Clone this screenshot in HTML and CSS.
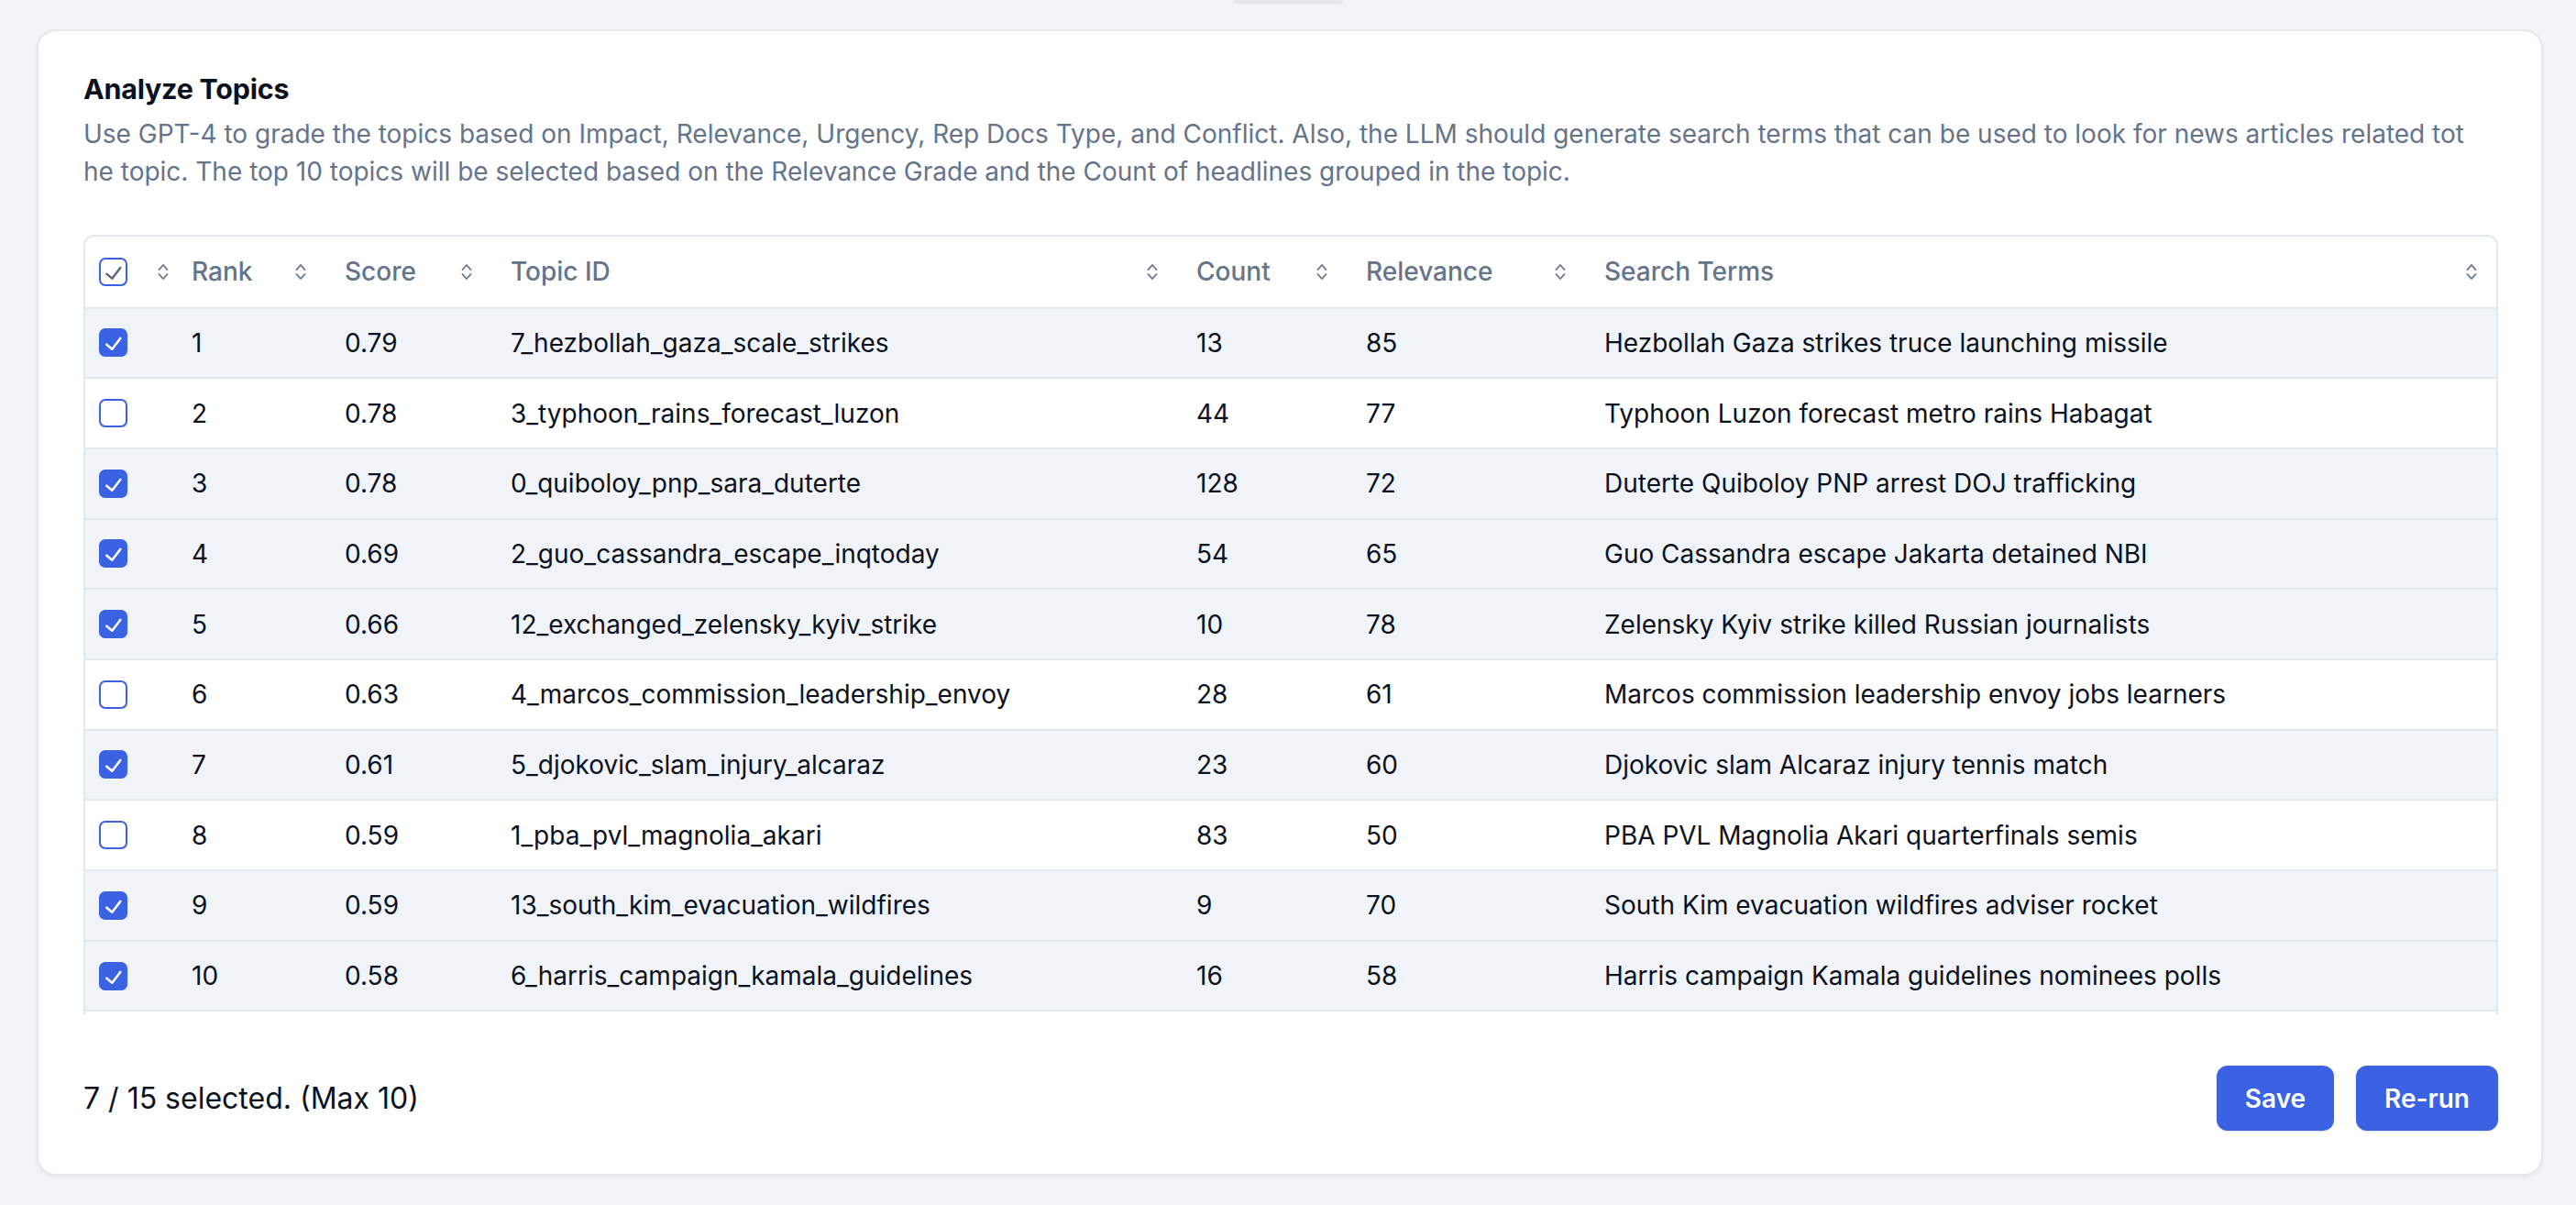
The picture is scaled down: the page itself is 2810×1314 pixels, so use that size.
FILE: index.html
```html
<!DOCTYPE html>
<html lang="en">
<head>
<meta charset="utf-8">
<title>Analyze Topics</title>
<link rel="stylesheet" href="styles.css">
</head>
<body>
<div class="topnub"></div>
<main class="card">
  <h1 class="title">Analyze Topics</h1>
  <p class="desc">Use GPT-4 to grade the topics based on Impact, Relevance, Urgency, Rep Docs Type, and Conflict. Also, the LLM should generate search terms that can be used to look for news articles related tot<br>he topic. The top 10 topics will be selected based on the Relevance Grade and the Count of headlines grouped in the topic.</p>

  <div class="table-wrap">
    <div class="row head">
      <div class="cell c0"><span class="cb head-cb"><svg viewBox="0 0 27 27"><path d="M6.3 15.7 L12.3 20.7 L21.3 9"/></svg></span><svg class="sort" viewBox="0 0 12 19"><path d="M1.5 7 L6 2 L10.5 7 M1.5 12 L6 17 L10.5 12"/></svg></div>
      <div class="cell c1"><span>Rank</span><svg class="sort" viewBox="0 0 12 19"><path d="M1.5 7 L6 2 L10.5 7 M1.5 12 L6 17 L10.5 12"/></svg></div>
      <div class="cell"><span>Score</span><svg class="sort" viewBox="0 0 12 19"><path d="M1.5 7 L6 2 L10.5 7 M1.5 12 L6 17 L10.5 12"/></svg></div>
      <div class="cell"><span>Topic ID</span><svg class="sort" viewBox="0 0 12 19"><path d="M1.5 7 L6 2 L10.5 7 M1.5 12 L6 17 L10.5 12"/></svg></div>
      <div class="cell"><span>Count</span><svg class="sort" viewBox="0 0 12 19"><path d="M1.5 7 L6 2 L10.5 7 M1.5 12 L6 17 L10.5 12"/></svg></div>
      <div class="cell"><span>Relevance</span><svg class="sort" viewBox="0 0 12 19"><path d="M1.5 7 L6 2 L10.5 7 M1.5 12 L6 17 L10.5 12"/></svg></div>
      <div class="cell"><span>Search Terms</span><svg class="sort" viewBox="0 0 12 19"><path d="M1.5 7 L6 2 L10.5 7 M1.5 12 L6 17 L10.5 12"/></svg></div>
    </div>

    <div class="row sel">
      <div class="cell c0"><span class="cb on"><svg viewBox="0 0 27 27"><path d="M6.3 15.7 L12.3 20.7 L21.3 9"/></svg></span></div>
      <div class="cell c1">1</div><div class="cell">0.79</div><div class="cell">7_hezbollah_gaza_scale_strikes</div><div class="cell">13</div><div class="cell">85</div><div class="cell">Hezbollah Gaza strikes truce launching missile</div>
    </div>
    <div class="row">
      <div class="cell c0"><span class="cb"></span></div>
      <div class="cell c1">2</div><div class="cell">0.78</div><div class="cell">3_typhoon_rains_forecast_luzon</div><div class="cell">44</div><div class="cell">77</div><div class="cell">Typhoon Luzon forecast metro rains Habagat</div>
    </div>
    <div class="row sel">
      <div class="cell c0"><span class="cb on"><svg viewBox="0 0 27 27"><path d="M6.3 15.7 L12.3 20.7 L21.3 9"/></svg></span></div>
      <div class="cell c1">3</div><div class="cell">0.78</div><div class="cell">0_quiboloy_pnp_sara_duterte</div><div class="cell">128</div><div class="cell">72</div><div class="cell">Duterte Quiboloy PNP arrest DOJ trafficking</div>
    </div>
    <div class="row sel">
      <div class="cell c0"><span class="cb on"><svg viewBox="0 0 27 27"><path d="M6.3 15.7 L12.3 20.7 L21.3 9"/></svg></span></div>
      <div class="cell c1">4</div><div class="cell">0.69</div><div class="cell">2_guo_cassandra_escape_inqtoday</div><div class="cell">54</div><div class="cell">65</div><div class="cell">Guo Cassandra escape Jakarta detained NBI</div>
    </div>
    <div class="row sel">
      <div class="cell c0"><span class="cb on"><svg viewBox="0 0 27 27"><path d="M6.3 15.7 L12.3 20.7 L21.3 9"/></svg></span></div>
      <div class="cell c1">5</div><div class="cell">0.66</div><div class="cell">12_exchanged_zelensky_kyiv_strike</div><div class="cell">10</div><div class="cell">78</div><div class="cell">Zelensky Kyiv strike killed Russian journalists</div>
    </div>
    <div class="row">
      <div class="cell c0"><span class="cb"></span></div>
      <div class="cell c1">6</div><div class="cell">0.63</div><div class="cell">4_marcos_commission_leadership_envoy</div><div class="cell">28</div><div class="cell">61</div><div class="cell">Marcos commission leadership envoy jobs learners</div>
    </div>
    <div class="row sel">
      <div class="cell c0"><span class="cb on"><svg viewBox="0 0 27 27"><path d="M6.3 15.7 L12.3 20.7 L21.3 9"/></svg></span></div>
      <div class="cell c1">7</div><div class="cell">0.61</div><div class="cell">5_djokovic_slam_injury_alcaraz</div><div class="cell">23</div><div class="cell">60</div><div class="cell">Djokovic slam Alcaraz injury tennis match</div>
    </div>
    <div class="row">
      <div class="cell c0"><span class="cb"></span></div>
      <div class="cell c1">8</div><div class="cell">0.59</div><div class="cell">1_pba_pvl_magnolia_akari</div><div class="cell">83</div><div class="cell">50</div><div class="cell">PBA PVL Magnolia Akari quarterfinals semis</div>
    </div>
    <div class="row sel">
      <div class="cell c0"><span class="cb on"><svg viewBox="0 0 27 27"><path d="M6.3 15.7 L12.3 20.7 L21.3 9"/></svg></span></div>
      <div class="cell c1">9</div><div class="cell">0.59</div><div class="cell">13_south_kim_evacuation_wildfires</div><div class="cell">9</div><div class="cell">70</div><div class="cell">South Kim evacuation wildfires adviser rocket</div>
    </div>
    <div class="row sel">
      <div class="cell c0"><span class="cb on"><svg viewBox="0 0 27 27"><path d="M6.3 15.7 L12.3 20.7 L21.3 9"/></svg></span></div>
      <div class="cell c1">10</div><div class="cell">0.58</div><div class="cell">6_harris_campaign_kamala_guidelines</div><div class="cell">16</div><div class="cell">58</div><div class="cell">Harris campaign Kamala guidelines nominees polls</div>
    </div>
  </div>

  <div class="footer">
    <span class="selected">7 / 15 selected. (Max 10)</span>
    <div class="actions">
      <button class="btn" type="button">Save</button>
      <button class="btn" type="button">Re-run</button>
    </div>
  </div>
</main>
</body>
</html>
```
FILE: styles.css
```css
html, body {
  margin: 0;
  padding: 0;
}
body {
  background: #f3f4f6;
  font-family: Inter, "Noto Sans", "Liberation Sans", sans-serif;
  color: #0f172a;
  width: 2810px;
  height: 1314px;
  overflow: hidden;
}
.topnub {
  width: 119px;
  height: 2px;
  margin: 0 auto;
  background: #e6e8eb;
  border-radius: 0 0 6px 6px;
  box-shadow: 0 1px 3px rgba(15, 23, 42, 0.14);
}
.card {
  box-sizing: border-box;
  width: 2734px;
  height: 1250px;
  margin: 30px 0 0 40px;
  padding: 41px 47px 0 49px;
  background: #ffffff;
  border: 2px solid #e5e7eb;
  border-radius: 21px;
  box-shadow: 0 2px 4px rgba(15, 23, 42, 0.06);
}
.title {
  margin: 0;
  font-size: 30.4px;
  line-height: 44px;
  font-weight: 700;
  color: #0b1120;
  letter-spacing: -0.2px;
}
.desc {
  margin: 7px 0 0;
  font-size: 28px;
  line-height: 41px;
  color: #64748b;
  font-weight: 400;
}
.table-wrap {
  box-sizing: border-box;
  margin-top: 47.5px;
  height: 851.5px;
  overflow: hidden;
  border: 2px solid #e2e8f0;
  border-bottom: none;
  border-radius: 12px 12px 0 0;
}
.row {
  display: grid;
  grid-template-columns: 105px 157px 181px 748px 185px 260px 994px;
  box-sizing: border-box;
  height: 76.7px;
  border-bottom: 2px solid #e2e8f0;
  align-items: center;
  font-size: 28px;
  line-height: 42px;
  color: #0b1120;
}
.row.sel {
  background: #f0f4f9;
}
.row.head {
  height: 79px;
  background: #ffffff;
  color: #64748b;
  font-weight: 500;
}
.cell {
  padding: 0 21px;
  white-space: nowrap;
  overflow: hidden;
}
.head .cell {
  display: flex;
  align-items: center;
  justify-content: space-between;
}
.cell.c0 {
  padding: 0 14px 0 15px;
  display: flex;
  align-items: center;
}
.head .cell.c0 {
  justify-content: space-between;
}
.cell.c1 {
  padding-left: 11px;
}
.sort {
  width: 12px;
  height: 19px;
  flex: none;
  fill: none;
  stroke: #64748b;
  stroke-width: 1.8;
  stroke-linecap: round;
  stroke-linejoin: round;
}
.cb {
  box-sizing: border-box;
  width: 31px;
  height: 31px;
  border: 2px solid #3a62e2;
  border-radius: 7px;
  background: #ffffff;
  box-shadow: 0 1px 2px rgba(15, 23, 42, 0.1);
  display: flex;
  flex: none;
}
.cb svg {
  width: 27px;
  height: 27px;
  fill: none;
  stroke: #ffffff;
  stroke-width: 2.6;
  stroke-linecap: round;
  stroke-linejoin: round;
}
.cb.on {
  background: #3a62e2;
}
.cb.head-cb svg {
  stroke: #5b6577;
  stroke-width: 2.4;
}
.footer {
  display: flex;
  align-items: center;
  justify-content: space-between;
  margin-top: 55px;
}
.selected {
  font-size: 32px;
  line-height: 46px;
  color: #0b1120;
}
.actions {
  display: flex;
  gap: 24px;
}
.btn {
  box-sizing: border-box;
  height: 71px;
  padding: 0 31px;
  border: none;
  border-radius: 12px;
  background: #3a62e2;
  color: #ffffff;
  font-family: Inter, "Noto Sans", "Liberation Sans", sans-serif;
  font-size: 28px;
  font-weight: 600;
  line-height: 42px;
  box-shadow: 0 1px 2px rgba(15, 23, 42, 0.12);
}
```
